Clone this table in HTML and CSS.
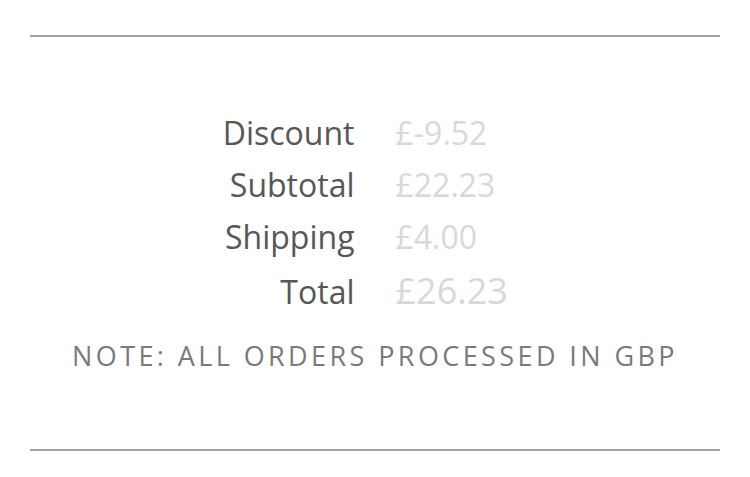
FILE: index.html
```html
<!DOCTYPE html>
<html>
<head>
<meta charset="utf-8">
<link rel="stylesheet" href="styles.css">
</head>
<body>
<section class="summary">
  <div class="totals">
    <div class="label">Discount</div><div class="value">£-9.52</div>
    <div class="label">Subtotal</div><div class="value">£22.23</div>
    <div class="label">Shipping</div><div class="value">£4.00</div>
    <div class="label total">Total</div><div class="value total">£26.23</div>
  </div>
  <p class="note">NOTE: ALL ORDERS PROCESSED IN GBP</p>
</section>
</body>
</html>
```
FILE: styles.css
```css
html, body {
  margin: 0;
  padding: 0;
  background: #fff;
}
body {
  font-family: "Open Sans", "Liberation Sans", sans-serif;
}
.summary {
  margin: 35px 30px 0;
  border-top: 2px solid #a3a3a3;
  border-bottom: 2px solid #a3a3a3;
  padding: 70px 0 75px;
}
.totals {
  display: grid;
  grid-template-columns: 1fr 1fr;
  column-gap: 41px;
  align-items: baseline;
}
.label {
  text-align: right;
  color: #575757;
  font-size: 32px;
  line-height: 52px;
}
.value {
  color: #dcd7d7;
  font-size: 32px;
  line-height: 52px;
}
.total {
  margin-top: 2px;
}
.value.total {
  font-size: 36px;
}
.note {
  margin: 20px 0 0;
  text-align: center;
  color: #7a7a7a;
  font-size: 27px;
  letter-spacing: 3.4px;
  line-height: 36px;
}
```
